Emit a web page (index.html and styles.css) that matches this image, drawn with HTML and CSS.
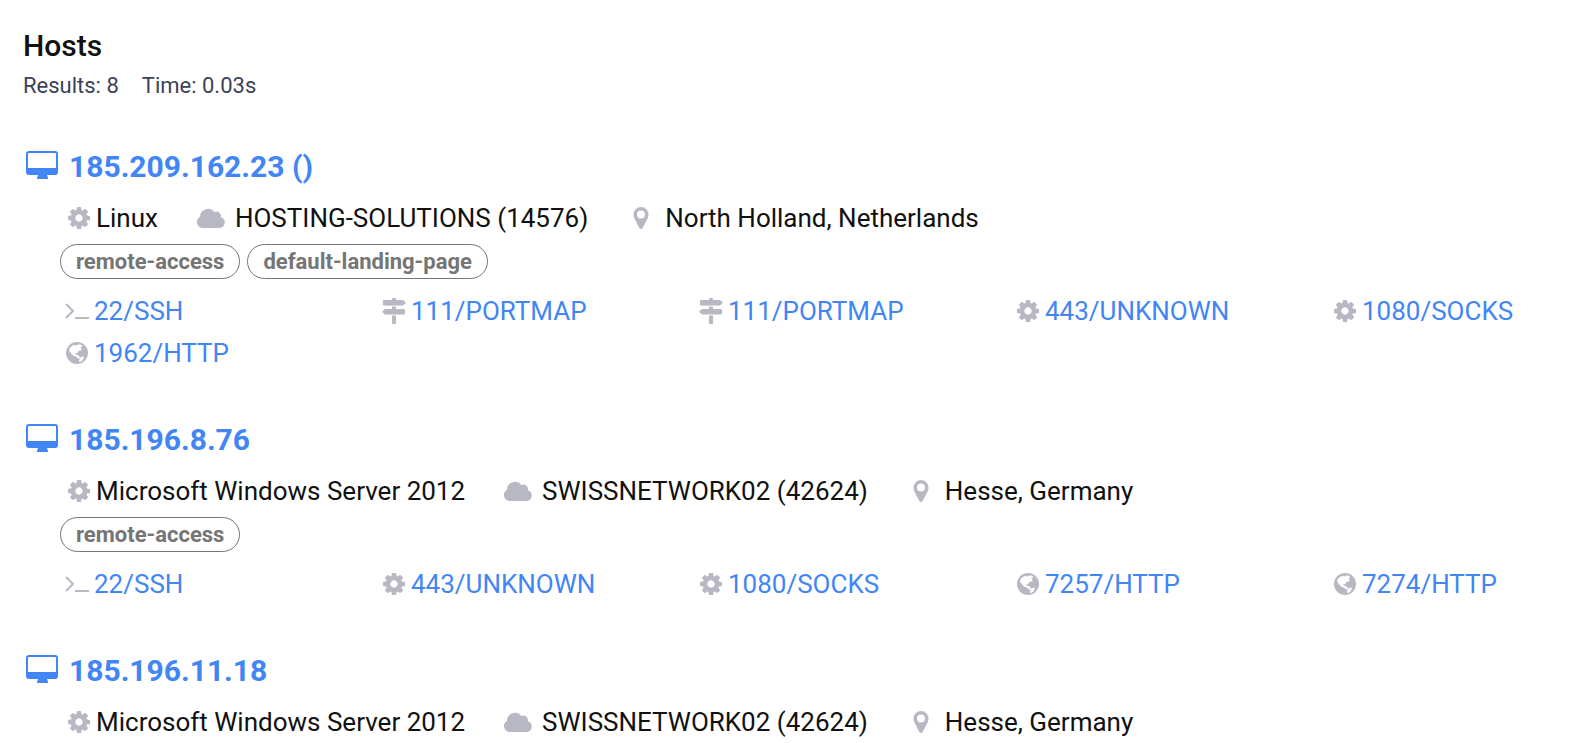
FILE: index.html
```html
<!DOCTYPE html>
<html lang="en">
<head>
    <meta charset="UTF-8">
    <meta name="viewport" content="width=device-width, initial-scale=1.0">
    <title>Hosts</title>
    <link rel="stylesheet" href="styles.css">
</head>
<body>
    <!-- Shared icons -->
    <svg class="sprite" aria-hidden="true">
        <symbol id="desktop" viewBox="0 0 32 28">
            <path fill-rule="evenodd" d="M3 0h26a3 3 0 0 1 3 3v18a3 3 0 0 1-3 3h-8l1 3v1H11v-1l1-3H3a3 3 0 0 1-3-3V3a3 3 0 0 1 3-3zm0 2a1 1 0 0 0-1 1v14h28V3a1 1 0 0 0-1-1z"/>
        </symbol>
        <symbol id="cog" viewBox="128 128 1536 1536">
            <path d="M1152 896q0-106-75-181t-181-75-181 75-75 181 75 181 181 75 181-75 75-181zm512-109v222q0 12-8 23t-20 13l-185 28q-19 54-39 91 35 50 107 138 10 12 10 25t-9 23q-27 37-99 108t-94 71q-12 0-26-9l-138-108q-44 23-91 38-16 136-29 186-7 28-36 28h-222q-14 0-24.500-8.500t-11.500-21.500l-28-184q-49-16-90-37l-141 107q-10 9-25 9-14 0-25-11-126-114-165-168-7-10-7-23 0-12 8-23 15-21 51-66.500t54-70.500q-27-50-41-99l-183-27q-13-2-21-12.500t-8-23.500v-222q0-12 8-23t19-13l186-28q14-46 39-92-40-57-107-138-10-12-10-24 0-10 9-23 26-36 98.500-107.500t94.500-71.500q13 0 26 10l138 107q44-23 91-38 16-136 29-186 7-28 36-28h222q14 0 24.500 8.500t11.500 21.500l28 184q49 16 90 37l142-107q9-9 24-9 13 0 25 10 129 119 165 170 7 8 7 22 0 12-8 23-15 21-51 66.500t-54 70.500q26 50 41 98l183 28q13 2 21 12.500t8 23.500z"/>
        </symbol>
        <symbol id="cloud" viewBox="0 0 28 20">
            <path d="M6 20a6 6 0 0 1-3-11.200A8 8 0 0 1 17.500 4.200 4.300 4.300 0 0 1 23.700 9.200 5.500 5.500 0 0 1 22.500 20z"/>
        </symbol>
        <symbol id="pin" viewBox="0 0 15 22">
            <path fill-rule="evenodd" d="M7.500 0A7.500 7.500 0 0 1 15 7.500c0 2-.6 3.500-1.500 5.300L9 21.200q-1.500 1.600-3 0L1.500 12.800C.6 11 0 9.500 0 7.500A7.500 7.500 0 0 1 7.500 0zm0 3.600a4 4 0 1 0 0 8 4 4 0 0 0 0-8z"/>
        </symbol>
        <symbol id="terminal" viewBox="0 0 24 16">
            <path d="M1 1l7 7-7 7M10 15h14" fill="none" stroke="currentColor" stroke-width="2"/>
        </symbol>
        <symbol id="signs" viewBox="0 0 24 26">
            <path d="M10 1q0-1 1-1h2q1 0 1 1v1h7l3 2.700L21 7.500H2q-1 0-1-1V3q0-1 1-1h8zM10 8.500h4V11h8q1 0 1 1v3.500q0 1-1 1H3l-3-2.700L3 11h7zM10 17.500h4V25q0 1-1 1h-2q-1 0-1-1z"/>
        </symbol>
        <symbol id="globe" viewBox="0 0 22 22">
            <circle cx="11" cy="11" r="11"/>
            <path fill="#fff" d="M4 5.500L7.500 3l3 .6 1.500-1.200 3.500.4.700 1.700-2 1 1.500 1.400-.7 1.700-2.200.2-1.800 2.400-1.800.2.300 1.300 2.500.4 2 1.800-.5 1.800-1.700-.5-2-1.800-2.500-.6-2.800-3-1.500-2.300zM14.500 15.300l3-.7.500 1.200-1.800 2.900-2.400 1.500-.9-1.600z"/>
        </symbol>
    </svg>

    <main class="results">
        <h1 class="title">Hosts</h1>
        <div class="summary">
            <span>Results: 8</span>
            <span>Time: 0.03s</span>
        </div>

        <section class="host">
            <h2 class="host-name">
                <svg class="icon-desktop"><use href="#desktop"/></svg>
                <a href="#">185.209.162.23 ()</a>
            </h2>
            <div class="meta">
                <span class="meta-item os"><svg class="icon"><use href="#cog"/></svg>Linux</span>
                <span class="meta-item"><svg class="icon icon-cloud"><use href="#cloud"/></svg>HOSTING-SOLUTIONS (14576)</span>
                <span class="meta-item"><svg class="icon"><use href="#pin"/></svg>North Holland, Netherlands</span>
            </div>
            <div class="tags">
                <span class="tag">remote-access</span>
                <span class="tag">default-landing-page</span>
            </div>
            <div class="ports">
                <a class="port" href="#"><svg class="icon icon-terminal"><use href="#terminal"/></svg>22/SSH</a>
                <a class="port" href="#"><svg class="icon icon-signs"><use href="#signs"/></svg>111/PORTMAP</a>
                <a class="port" href="#"><svg class="icon icon-signs"><use href="#signs"/></svg>111/PORTMAP</a>
                <a class="port" href="#"><svg class="icon"><use href="#cog"/></svg>443/UNKNOWN</a>
                <a class="port" href="#"><svg class="icon"><use href="#cog"/></svg>1080/SOCKS</a>
                <a class="port" href="#"><svg class="icon"><use href="#globe"/></svg>1962/HTTP</a>
            </div>
        </section>

        <section class="host">
            <h2 class="host-name">
                <svg class="icon-desktop"><use href="#desktop"/></svg>
                <a href="#">185.196.8.76</a>
            </h2>
            <div class="meta">
                <span class="meta-item os"><svg class="icon"><use href="#cog"/></svg>Microsoft Windows Server 2012</span>
                <span class="meta-item"><svg class="icon icon-cloud"><use href="#cloud"/></svg>SWISSNETWORK02 (42624)</span>
                <span class="meta-item"><svg class="icon"><use href="#pin"/></svg>Hesse, Germany</span>
            </div>
            <div class="tags">
                <span class="tag">remote-access</span>
            </div>
            <div class="ports">
                <a class="port" href="#"><svg class="icon icon-terminal"><use href="#terminal"/></svg>22/SSH</a>
                <a class="port" href="#"><svg class="icon"><use href="#cog"/></svg>443/UNKNOWN</a>
                <a class="port" href="#"><svg class="icon"><use href="#cog"/></svg>1080/SOCKS</a>
                <a class="port" href="#"><svg class="icon"><use href="#globe"/></svg>7257/HTTP</a>
                <a class="port" href="#"><svg class="icon"><use href="#globe"/></svg>7274/HTTP</a>
            </div>
        </section>

        <section class="host">
            <h2 class="host-name">
                <svg class="icon-desktop"><use href="#desktop"/></svg>
                <a href="#">185.196.11.18</a>
            </h2>
            <div class="meta">
                <span class="meta-item os"><svg class="icon"><use href="#cog"/></svg>Microsoft Windows Server 2012</span>
                <span class="meta-item"><svg class="icon icon-cloud"><use href="#cloud"/></svg>SWISSNETWORK02 (42624)</span>
                <span class="meta-item"><svg class="icon"><use href="#pin"/></svg>Hesse, Germany</span>
            </div>
        </section>
    </main>
</body>
</html>
```
FILE: styles.css
```css
* {
    box-sizing: border-box;
}

body {
    margin: 0;
    background-color: #fff;
    color: #111;
    font-family: Roboto, sans-serif;
    font-size: 26px;
    line-height: 40px;
}

a {
    color: #4285f4;
    text-decoration: none;
}

a:hover {
    text-decoration: underline;
}

.sprite {
    display: none;
}

.results {
    padding: 26px 23px 0;
}

.title {
    margin: 0 0 5px;
    font-size: 30px;
    font-weight: 500;
}

.summary {
    display: flex;
    gap: 23px;
    margin-bottom: 46px;
    color: #3c4257;
    font-size: 22px;
    line-height: 30px;
}

.host {
    margin-bottom: 46px;
}

.host:last-child {
    margin-bottom: 0;
}

.host-name {
    display: flex;
    align-items: center;
    gap: 11px;
    margin: 0 0 11px;
    padding-left: 3px;
    font-size: 30px;
    font-weight: 700;
}

.icon-desktop {
    width: 32px;
    height: 28px;
    margin-bottom: 4px;
    fill: #4285f4;
}

.icon {
    flex-shrink: 0;
    width: 28px;
    height: 22px;
    color: #b7b8c4;
    fill: currentColor;
}

.icon-cloud {
    height: 20px;
}

.icon-terminal {
    height: 16px;
}

.icon-signs {
    height: 26px;
}

.meta {
    display: flex;
    flex-wrap: wrap;
    column-gap: 39px;
    margin-bottom: 6px;
    padding-left: 42px;
}

.meta-item {
    display: flex;
    align-items: center;
    gap: 10px;
}

.os {
    gap: 3px;
}

.tags {
    display: flex;
    flex-wrap: wrap;
    gap: 7px;
    margin-bottom: 11px;
    padding-left: 37px;
}

.tag {
    padding: 0 15px;
    border: 1px solid #757575;
    border-radius: 18px;
    color: #757575;
    font-size: 22px;
    font-weight: 700;
    line-height: 33px;
}

.ports {
    display: grid;
    grid-template-columns: repeat(5, 1fr);
    column-gap: 88px;
    padding-left: 40px;
    line-height: 42px;
}

.port {
    display: flex;
    align-items: center;
    gap: 3px;
    white-space: nowrap;
}
```
